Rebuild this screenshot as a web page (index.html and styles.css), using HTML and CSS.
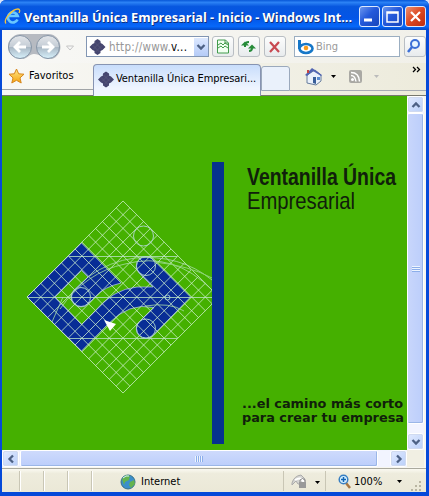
FILE: index.html
```html
<!DOCTYPE html>
<html lang="es">
<head>
<meta charset="utf-8">
<title>Ventanilla Única Empresarial</title>
<link rel="stylesheet" href="styles.css">
</head>
<body>
<svg width="0" height="0" class="defs">
  <defs>
    <linearGradient id="orb" x1="0" y1="0" x2="0" y2="1"><stop offset="0" stop-color="#e3e6ea"/><stop offset=".48" stop-color="#c5cdd6"/><stop offset=".52" stop-color="#a9b7c4"/><stop offset="1" stop-color="#d8f2fc"/></linearGradient>
    <linearGradient id="star" x1="0" y1="0" x2="0" y2="1"><stop offset="0" stop-color="#ffe98a"/><stop offset="1" stop-color="#f5a20c"/></linearGradient>
    <symbol id="flower" viewBox="0 0 16 16"><path d="M8 0l3 2v2l2 1 3 3-3 3-2 1v2l-3 2-3-2v-2l-2-1-3-3 3-3 2-1V2z" fill="#45456f"/><path d="M5 3l7 7M3 6l7 7M11 3l-7 7M13 6l-7 7" stroke="#5c5c7c" stroke-width=".6"/></symbol>
    <symbol id="chev" viewBox="0 0 10 8"><path d="M1.500 2L5 5.500 8.500 2" fill="none" stroke="#4d6185" stroke-width="2.300"/></symbol>
  </defs>
</svg>
<div class="window">
  <header class="titlebar">
    <svg class="ie" width="17" height="17" viewBox="0 0 17 17"><path d="M13.500 11.500A5 5 0 1 1 13.700 8H5" fill="none" stroke="#69c8ff" stroke-width="2.700"/><path d="M2 15.500C-1 12 8 1 14 1c2 0 2 2 1 4" fill="none" stroke="#f5c33b" stroke-width="1.300"/></svg>
    <svg class="caption" width="335" height="22"><text x="0" y="16" textLength="328" lengthAdjust="spacingAndGlyphs">Ventanilla Única Empresarial - Inicio - Windows Int...</text></svg>
    <span class="winbtn"><svg width="19" height="19"><path d="M4 13h8" stroke="#fff" stroke-width="3"/></svg></span>
    <span class="winbtn"><svg width="19" height="19"><path d="M4 5h11v10H4zM4 6h11" fill="none" stroke="#fff" stroke-width="1.500"/></svg></span>
    <span class="winbtn close"><svg width="19" height="19"><path d="M5 5l9 9M14 5l-9 9" stroke="#fff" stroke-width="2.200"/></svg></span>
  </header>
  <nav class="navbar">
    <svg class="orbs" width="69" height="28" viewBox="0 0 69 28">
      <path d="M13 2H41C56 2 58 24 44 27 36 28 34 22 27 22 22 22 20 28 13 27-3 25-3 4 13 2z" fill="#b6bac1"/>
      <g fill="url(#orb)" stroke="#8594a5"><circle cx="13" cy="15" r="11.500"/><circle cx="41" cy="15" r="11.500"/></g>
      <path d="M19 15H8m5-5l-5 5 5 5M35 15h11m-5-5l5 5-5 5" fill="none" stroke="#fff" stroke-width="2.800"/>
      <path d="M59.500 14h7L63 18z" fill="#f7f7f7" stroke="#c5c5c5"/>
    </svg>
    <div class="address"><svg width="17" height="16"><use href="#flower"/></svg><span class="url">http://www.<b>v...</b></span><span class="drop"><svg width="10" height="8"><use href="#chev"/></svg></span></div>
    <span class="tool t1"><svg width="19" height="19"><path d="M4.500 3h8l3 3v10h-11zM5 8l3-2 2 2 2-2 3 2M5 11l3-2 2 2 2-2 3 2M12 3v3h3" fill="#f1fff1" stroke="#419b4c"/></svg></span>
    <span class="tool"><svg width="19" height="19"><path d="M6 10V8q0-3 4-3M13 9v2q0 3-3 3" fill="none" stroke="#268b39" stroke-width="2"/><path d="M2 7.500h8L6 3.500zM9 10.500h8l-4-4z" transform="translate(0 1)" fill="#268b39"/></svg></span>
    <span class="tool"><svg width="19" height="19"><path d="M5 5l9 10M14 5L5 15" stroke="#c84a52" stroke-width="2.200"/></svg></span>
    <div class="search"><svg width="18" height="16"><path d="M2.500 1v9" stroke="#1677c8" stroke-width="3"/><ellipse cx="9" cy="9.500" rx="6.500" ry="4.500" fill="#fff" stroke="#1677c8" stroke-width="2.600"/><circle cx="9" cy="9" r="2.300" fill="#f79c1d"/></svg><span>Bing</span></div>
    <span class="tool find"><svg width="17" height="19"><circle cx="10" cy="7" r="4" fill="#e8f6ff" stroke="#3d70d6" stroke-width="2"/><path d="M7 10l-4 5" stroke="#3d70d6" stroke-width="2.500"/></svg></span>
  </nav>
  <div class="tabbar">
    <div class="fav"><svg width="17" height="16" viewBox="0 0 17 16"><path d="M8.500 1l2.200 4.800 5.300.4-4 3.700 1.200 5.100-4.700-2.700L3.800 15 5 9.900 1 6.200l5.300-.4z" fill="url(#star)" stroke="#d6861c"/></svg><span>Favoritos</span></div>
    <div class="tab"><svg width="16" height="17"><use href="#flower"/></svg><span>Ventanilla Única Empresari...</span></div>
    <div class="newtab"></div>
    <div class="commands">
      <svg width="31" height="19"><path d="M2 8v8l9 2 5-4V8l-6-5z" fill="#eaf1fb" stroke="#667c9c"/><path d="M0 8L7 1l10 7-1 1-8-5-6 5z" fill="#5265b2"/><path d="M2 3h2v3H2z" fill="#c54545"/><path d="M8 10h3v7l-3-1z" fill="#385e99"/><path d="M12 10h3v3h-3z" fill="#5a8bd0"/><path d="M26 8h5l-2.500 3z" fill="#000"/></svg>
      <svg class="feed" width="31" height="19"><rect x="1" y="3" width="13" height="13" rx="2" fill="#aaa9a4"/><circle cx="4.500" cy="12.500" r="1.500" fill="#fff"/><path d="M3 8.500q4 0 5 6M3 5.500q8 0 8.500 9" fill="none" stroke="#fff" stroke-width="1.500"/><path d="M26 8h5l-2.500 3z" fill="#bbb"/></svg>
      <svg class="more" width="9" height="8"><path d="M1 1l2.500 2.500L1 6M5 1l2.500 2.500L5 6" fill="none" stroke="#000" stroke-width="1.300"/></svg>
    </div>
  </div>
  <main class="viewport">
    <svg class="page" width="405" height="354" viewBox="2 96 405 354">
      <defs>
        <clipPath id="cut"><rect x="20" y="195" width="192" height="204"/></clipPath>
      </defs>
      <rect x="2" y="96" width="405" height="354" fill="#45b000"/>
      <g fill="#082d96" stroke="#a8b9ec" stroke-width=".8">
        <path d="M27 297L81.500 243 121 283Q104 287 96 296L88 304A9.700 9.700 0 0 1 74 290L88 277 81.500 270.500 55 297 81.500 324.500 93 313Q113 289 137 287H153L139 273A9.700 9.700 0 0 1 153 259.500L190.500 297 153 335.500A9.700 9.700 0 0 1 139 322L154 307.500Q129 302 108 324L81.500 351z"/>
      </g>
      <g clip-path="url(#cut)" fill="none">
        <path transform="translate(27 297) rotate(-45)" stroke="#d0f2cf" stroke-opacity=".8" stroke-width=".9" d="M0 0V135.800M9.700 0V135.800M19.400 0V135.800M29.100 0V135.800M38.800 0V135.800M48.500 0V135.800M58.200 0V135.800M67.900 0V135.800M77.600 0V135.800M87.300 0V135.800M97 0V135.800M106.700 0V135.800M116.400 0V135.800M126.100 0V135.800M135.800 0V135.800M0 0H135.800M0 9.700H135.800M0 19.400H135.800M0 29.100H135.800M0 38.800H135.800M0 48.500H135.800M0 58.200H135.800M0 67.900H135.800M0 77.600H135.800M0 87.300H135.800M0 97H135.800M0 106.700H135.800M0 116.400H135.800M0 126.100H135.800M0 135.800H135.800"/>
        <path d="M27 297.500H212M69 256.500H177M69 338.500H177" stroke="#b9e3c4" stroke-width=".8"/>
        <path d="M88 277Q110 261 135 258 180 254 212 280M60 309Q86 272 125 264 174 251 212 290M145 306Q170 302 184 311M52 322L63 297" stroke="#a9dda8" stroke-width=".8"/>
        <path d="M155 262Q190 266 212 278" stroke="#8cd572"/>
        <g stroke="#b0d7d0" stroke-width=".9"><circle cx="143.500" cy="236" r="10"/><circle cx="146" cy="266" r="9.500"/><circle cx="81" cy="297" r="9.500"/><circle cx="146" cy="328.500" r="9.500"/><circle cx="167.500" cy="297.500" r="2.500"/></g>
      </g>
      <path d="M104 320L116 324 110 331z" fill="#fff"/>
      <rect x="212" y="162" width="12" height="282" fill="#06328e"/>
      <g fill="#10200b">
        <text class="brand strong" x="247" y="185" textLength="149" lengthAdjust="spacingAndGlyphs">Ventanilla Única</text>
        <text class="brand" x="247" y="209" textLength="108" lengthAdjust="spacingAndGlyphs">Empresarial</text>
        <text class="slogan" x="242" y="408" textLength="161" lengthAdjust="spacingAndGlyphs">...el camino más corto</text>
        <text class="slogan" x="242" y="422" textLength="162" lengthAdjust="spacingAndGlyphs">para crear tu empresa</text>
      </g>
    </svg>
    <div class="vscroll"><span class="arrow"><svg class="up" width="10" height="8"><use href="#chev"/></svg></span><span class="thumb"><i></i></span><span class="arrow"><svg width="10" height="8"><use href="#chev"/></svg></span></div>
    <div class="hscroll"><span class="arrow"><svg class="left" width="10" height="8"><use href="#chev"/></svg></span><span class="thumb"><i></i></span><span class="arrow"><svg class="right" width="10" height="8"><use href="#chev"/></svg></span></div>
    <div class="corner"></div>
  </main>
  <footer class="status">
    <span class="cell first"></span><span class="cell"></span><span class="cell"></span><span class="cell"></span>
    <div class="zone"><svg width="16" height="16"><circle cx="8" cy="8" r="7" fill="#3b8fcb" stroke="#397184"/><path d="M2 5l4-4 4 1-1 4-4 2-1 3zM10 8l4-2 1 4-4 4-2-3z" fill="#64b34e"/><path d="M3 4q3-3 6-2" stroke="#d8f5fa" fill="none"/></svg><span>Internet</span></div>
    <div class="protect"><svg width="31" height="17"><path d="M1 10Q3 3 10 2l4 4v5H7l-2-3-4 4z" fill="#d5d5d2" stroke="#aaa"/><path d="M4 7q7-4 9 3" fill="none" stroke="#fff" stroke-width="2"/><rect x="8" y="9" width="7" height="6" fill="#999"/><path d="M9 9V7q2.500-3 5 0v2" fill="none" stroke="#888"/><path d="M24 8h5l-2.500 3z"/></svg></div>
    <div class="zoom"><svg width="14" height="15"><path d="M8 9l4 5" stroke="#a97742" stroke-width="2.500"/><circle cx="5.500" cy="5.500" r="4.300" fill="#d7f1ff" stroke="#397fc2" stroke-width="1.500"/><path d="M5.500 3v5M3 5.500h5" stroke="#1265b5" stroke-width="1.500"/></svg><span>100%</span><svg class="caret" width="6" height="4"><path d="M0 0h5L2.500 3z"/></svg></div>
    <svg class="grip" width="12" height="12"><path d="M9 1h2v2H9zM5 5h2v2H5zM9 5h2v2H9zM1 9h2v2H1zM5 9h2v2H5zM9 9h2v2H9z" fill="#b9b5a2"/></svg>
  </footer>
</div>
</body>
</html>
```
FILE: styles.css
```css
* { box-sizing: border-box; }
body { margin: 0; width: 429px; height: 496px; overflow: hidden; font: 11px "DejaVu Sans Condensed", "DejaVu Sans", sans-serif; color: #000; background: #d9e5fa; }
svg { display: block; flex: none; }
.defs { position: absolute; }
.window { width: 429px; height: 496px; padding: 0 3px 4px 2px; background: #0549d9; border-radius: 6px 6px 0 0; overflow: hidden; }
.titlebar { display: flex; align-items: center; height: 30px; margin: 0 -3px 0 -2px; padding: 3px 4px 0 4px; background: linear-gradient(#0756d7 0, #2c82f5 8%, #0757df 22%, #0355e7 60%, #0668fa 88%, #0348c4 100%); }
.caption { margin-left: 3px; fill: #fff; font: bold 13px "Open Sans", sans-serif; text-shadow: 1px 1px #103079; }
.winbtn { width: 21px; height: 21px; margin-right: 2px; border: 1px solid #dce9ff; border-radius: 3px; background: linear-gradient(135deg, #6b96ee, #2459db 45%, #1746bb); flex: none; }
.winbtn.close { background: linear-gradient(135deg, #ee9171, #dc4721 50%, #bd2d10); margin-right: 0; }
.navbar { display: flex; height: 33px; padding: 6px 0 0 5px; background: linear-gradient(90deg, #f8f8f6, #f1f0e9); overflow: hidden; }
.orbs { margin-top: -4px; }
.address { display: flex; align-items: center; width: 125px; height: 21px; margin-left: 10px; padding-left: 2px; border: 1px solid #8296b3; background: #fff; color: #969696; }
.url { margin-left: 3px; width: 85px; font-size: 11.500px; letter-spacing: .25px; white-space: nowrap; }
.url b { color: #000; font-weight: normal; }
.drop { display: flex; align-items: center; justify-content: center; width: 14px; height: 18px; background: linear-gradient(#dce8ff, #b5cbf7); }
.tool { width: 22px; height: 21px; margin-left: 4px; border: 1px solid #b9bec3; border-radius: 3px; background: linear-gradient(#fcfdfd, #e8ebed); flex: none; }
.t1 { margin-left: 3px; }
.search { display: flex; align-items: center; width: 106px; height: 21px; margin-left: 8px; padding-left: 2px; border: 1px solid #9baec1; background: #fff; color: #999; flex: none; }
.search span { margin-left: 1px; font-size: 11px; }
.find { margin-left: 4px; }
.tabbar { display: flex; height: 32px; background: linear-gradient(90deg, #f8f8f5, #edebdc); }
.fav { display: flex; width: 91px; height: 27px; padding: 5px 0 0 6px; border-bottom: 1px solid #a1a5a7; }
.fav span { margin: 1px 0 0 4px; }
.tab { display: flex; width: 168px; height: 32px; margin-top: 1px; padding: 6px 0 0 4px; border: 1px solid #8794b2; border-bottom: 0; border-radius: 4px 4px 0 0; background: linear-gradient(#c8ddfb, #eff5ff 75%); white-space: nowrap; }
.tab span { margin: 1px 0 0 2px; letter-spacing: -.08px; }
.newtab { width: 29px; height: 25px; margin-top: 3px; border: 1px solid #9ba9bc; border-radius: 3px 3px 0 0; background: #eaf1fb; }
.commands { display: flex; width: 136px; height: 28px; padding: 4px 0 0 15px; border-bottom: 1px solid #a7abb4; }
.feed { margin-left: 12px; }
.more { margin: -1px 0 0 33px; }
.viewport { display: grid; grid-template-columns: 405px 17px 1fr; grid-template-rows: 354px 17px; height: 373px; border-top: 1px solid #77786f; background: #f7f6ef; }
.vscroll, .hscroll { display: flex; background: #f2f4ff; }
.vscroll { flex-direction: column; }
.hscroll { grid-row: 2; grid-column: 1; }
.arrow { display: flex; align-items: center; justify-content: center; width: 17px; height: 17px; flex: none; border: 1px solid #fff; outline: 1px solid #d0daf0; outline-offset: -2px; border-radius: 3px; background: linear-gradient(135deg, #e1eaff, #b9cff9); }
.up { transform: rotate(180deg); }
.left { transform: rotate(90deg); }
.right { transform: rotate(-90deg); }
.thumb { display: flex; align-items: center; justify-content: center; border: 1px solid #fff; border-radius: 2px; box-shadow: inset -1px -1px #9bb6e7; }
.vscroll .thumb { height: 311px; margin-bottom: 9px; background: linear-gradient(90deg, #c8d6fb, #bccefb); flex: none; }
.hscroll .thumb { width: 358px; margin: 0 12px 0 1px; background: linear-gradient(#cedafc, #bccefb); flex: none; }
.thumb i { width: 8px; height: 6px; background: repeating-linear-gradient(90deg, #edf4fe 0 1px, #8caeea 1px 2px); }
.vscroll i { background: repeating-linear-gradient(#edf4fe 0 1px, #8caeea 1px 2px); }
.corner { grid-row: 2; grid-column: 2; background: #f1efe3; }
.status { display: flex; height: 24px; padding-top: 2px; border-top: 1px solid #aaa99e; background: linear-gradient(#faf9f1, #eeecdd 20%, #ebe8d7); }
.cell { width: 24px; height: 20px; border-right: 1px solid #c9c6b5; box-shadow: 1px 0 #fff; flex: none; }
.first { width: 18px; }
.zone { display: flex; align-items: center; width: 163px; margin-left: 28px; flex: none; }
.zone span { margin-left: 5px; }
.protect { width: 43px; height: 20px; padding: 2px 0 0 7px; border: solid #c9c6b5; border-width: 0 1px; flex: none; }
.zoom { display: flex; align-items: center; width: 83px; padding-left: 12px; flex: none; }
.zoom span { margin-left: 2px; }
.caret { margin-left: 15px; }
.grip { margin: 9px 0 0 1px; }
.brand { font: 24px "Liberation Sans Narrow", "Liberation Sans", sans-serif; }
.strong { font-weight: bold; }
.slogan { font: bold 13px "DejaVu Sans", sans-serif; }
```
